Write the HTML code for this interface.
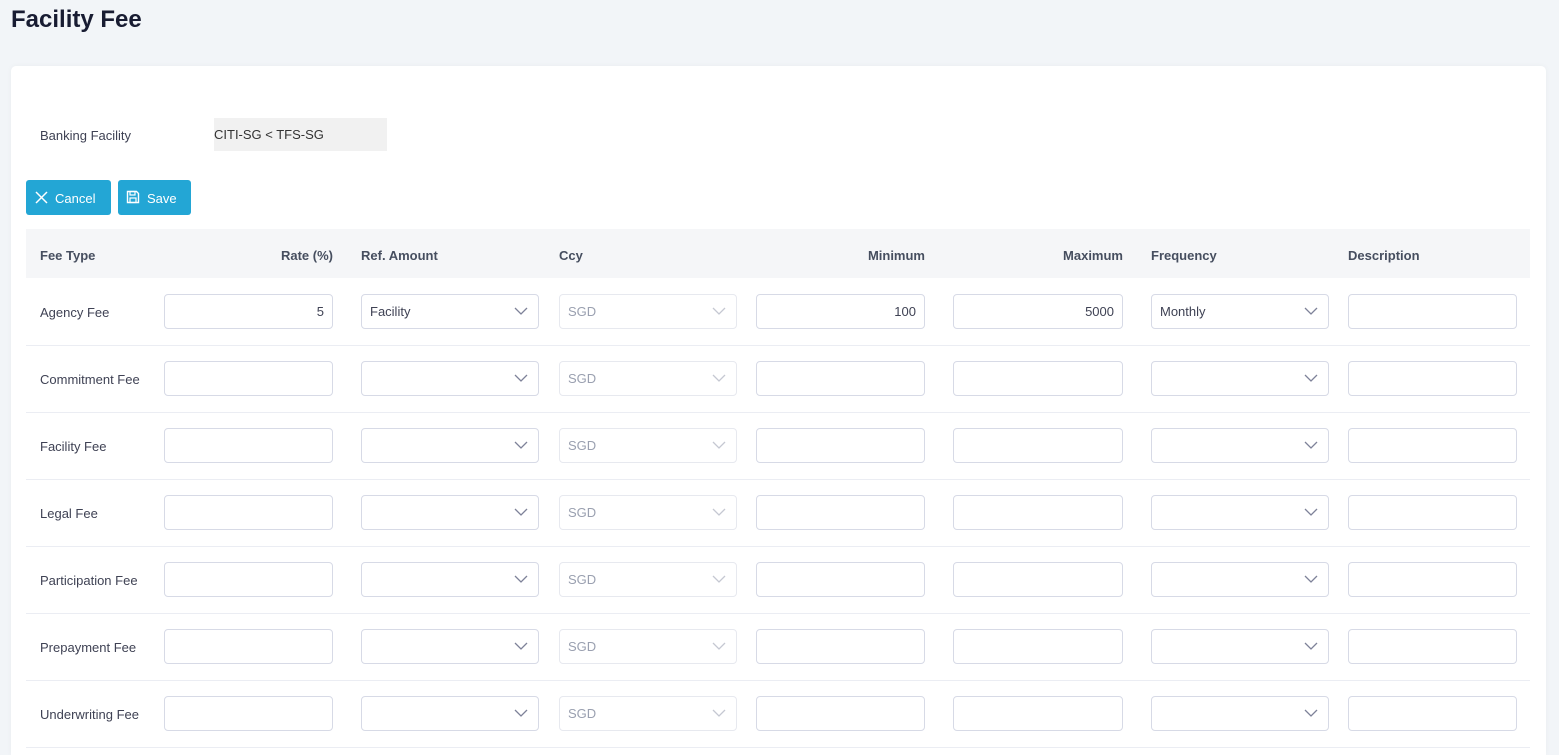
<!DOCTYPE html><html><head><style>
*{box-sizing:border-box;margin:0;padding:0}
html,body{overflow:hidden}
body{width:1559px;height:755px;background:#f2f5f8;font-family:"Liberation Sans",sans-serif;font-size:13px;color:#3f4254;position:relative}
h1{position:absolute;left:11px;top:6px;font-size:24px;font-weight:bold;color:#181c32}
.card{position:absolute;left:11px;top:66px;width:1535px;height:689px;background:#fff;border-radius:5px 5px 0 0;box-shadow:0 0 6px rgba(0,0,0,.04)}
.a{position:absolute}
.btn{position:absolute;top:180px;height:35px;background:#23a6d5;border-radius:3px;color:#fff;font-size:13px;line-height:35px}
.hdr{position:absolute;left:26px;top:229px;width:1504px;height:49px;background:#f5f6f8}
.th{position:absolute;top:248px;font-weight:bold;color:#464e5f;font-size:13px}
.row{position:absolute;left:26px;width:1504px;height:67px;border-bottom:1px solid #ebedf3}
.lbl{position:absolute;left:14px;top:26px;color:#3f4254}
.in{position:absolute;top:15px;height:35px;border:1px solid #d7dae6;border-radius:4px;background:#fff;line-height:33px;padding:0 8px;color:#3f4254}
.dis{border-color:#e7e9ef;color:#9aa0b0}
.chev{position:absolute;right:10px;top:11px}
</style></head><body>
<h1>Facility Fee</h1>
<div class="card"></div>
<div class="a" style="left:40px;top:128px">Banking Facility</div>
<div class="a" style="left:214px;top:118px;width:173px;height:33px;background:#f1f1f1;line-height:33px;color:#333">CITI-SG &lt; TFS-SG</div>
<div class="btn" style="left:26px;width:85px"><svg class="a" style="left:9px;top:11px" width="13" height="13" viewBox="0 0 13 13"><path d="M1 1L12 12M12 1L1 12" stroke="#fff" stroke-width="1.5"/></svg><span class="a" style="left:29px;top:1px">Cancel</span></div>
<div class="btn" style="left:118px;width:73px"><svg class="a" style="left:8px;top:10px" width="14" height="14" viewBox="0 0 14 14"><path d="M1.5 1.5h9l2 2v9h-11z" fill="none" stroke="#fff" stroke-width="1.4"/><rect x="4" y="1.5" width="5" height="3.5" fill="none" stroke="#fff" stroke-width="1.2"/><rect x="4" y="8" width="6" height="4.5" fill="none" stroke="#fff" stroke-width="1.2"/></svg><span class="a" style="left:29px;top:1px">Save</span></div>
<div class="hdr"></div>
<div class="th" style="left:40px">Fee Type</div>
<div class="th" style="left:164px;width:169px;text-align:right">Rate (%)</div>
<div class="th" style="left:361px">Ref. Amount</div>
<div class="th" style="left:559px">Ccy</div>
<div class="th" style="left:756px;width:169px;text-align:right">Minimum</div>
<div class="th" style="left:953px;width:170px;text-align:right">Maximum</div>
<div class="th" style="left:1151px">Frequency</div>
<div class="th" style="left:1348px">Description</div>
<div id="rows"></div>
<script>
var names=["Agency Fee","Commitment Fee","Facility Fee","Legal Fee","Participation Fee","Prepayment Fee","Underwriting Fee"];
var chev='<svg class="chev" width="14" height="10" viewBox="0 0 14 10"><path d="M1 2l6 6 6-6" fill="none" stroke="#7e8299" stroke-width="1.3"/></svg>';
var chevd='<svg class="chev" width="14" height="10" viewBox="0 0 14 10"><path d="M1 2l6 6 6-6" fill="none" stroke="#c5c8d2" stroke-width="1.3"/></svg>';
var h="";
names.forEach(function(n,i){
 var f=i==0;
 h+='<div class="row" style="top:'+(279+67*i)+'px"><div class="lbl">'+n+'</div>'+
 '<div class="in" style="left:138px;width:169px;text-align:right">'+(f?'5':'')+'</div>'+
 '<div class="in" style="left:335px;width:178px">'+(f?'Facility':'')+chev+'</div>'+
 '<div class="in dis" style="left:533px;width:178px">SGD'+chevd+'</div>'+
 '<div class="in" style="left:730px;width:169px;text-align:right">'+(f?'100':'')+'</div>'+
 '<div class="in" style="left:927px;width:170px;text-align:right">'+(f?'5000':'')+'</div>'+
 '<div class="in" style="left:1125px;width:178px">'+(f?'Monthly':'')+chev+'</div>'+
 '<div class="in" style="left:1322px;width:169px"></div></div>';
});
document.getElementById("rows").innerHTML=h;
</script>
</body></html>
